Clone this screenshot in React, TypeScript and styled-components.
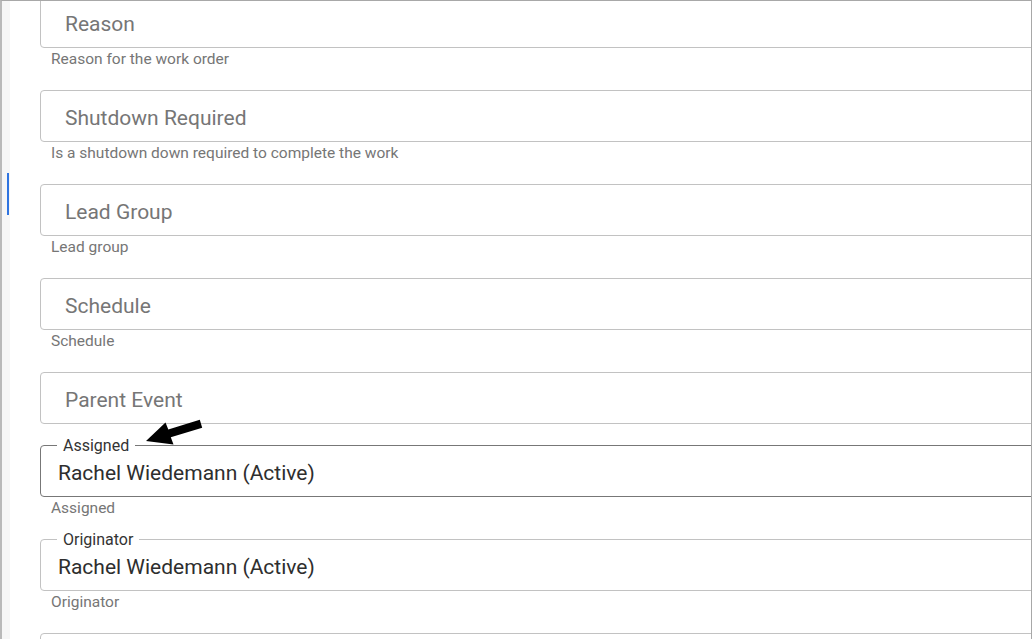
import styled, { createGlobalStyle } from 'styled-components';

const GlobalStyle = createGlobalStyle`
  html, body {
    margin: 0;
    padding: 0;
    background: #ffffff;
    font-family: Roboto, 'Liberation Sans', sans-serif;
  }
`;

type Field = {
  id: string;
  label: string;
  value?: string;
  helper?: string;
  active?: boolean;
};

const FIELDS: Field[] = [
  { id: 'reason', label: 'Reason', helper: 'Reason for the work order' },
  { id: 'shutdown', label: 'Shutdown Required', helper: 'Is a shutdown down required to complete the work' },
  { id: 'lead', label: 'Lead Group', helper: 'Lead group' },
  { id: 'schedule', label: 'Schedule', helper: 'Schedule' },
  { id: 'parent', label: 'Parent Event' },
  { id: 'assigned', label: 'Assigned', value: 'Rachel Wiedemann (Active)', helper: 'Assigned', active: true },
  { id: 'originator', label: 'Originator', value: 'Rachel Wiedemann (Active)', helper: 'Originator' },
  { id: 'next', label: '' },
];

const PointerArrow = () => (
  <ArrowSvg width='70' height='30' viewBox='140 415 70 30'>
    <polygon points='146,441 165.5,422.5 168.3,429.6 199.8,419.8 202.2,427.8 170.8,437.3 173.5,444.5' fill='#000' />
  </ArrowSvg>
);

const App = () => {
  return (
    <>
      <GlobalStyle />
      <Frame>
        <SideRail>
          <RailMarker />
        </SideRail>
        <Content>
          {FIELDS.map((field) => (
            <FieldGroup key={field.id}>
              <FieldBox active={field.active}>
                {field.value ? (
                  <>
                    <FloatLabel>{field.label}</FloatLabel>
                    <Value>{field.value}</Value>
                  </>
                ) : (
                  <Placeholder>{field.label}</Placeholder>
                )}
              </FieldBox>
              {field.helper && <Helper>{field.helper}</Helper>}
            </FieldGroup>
          ))}
        </Content>
        <PointerArrow />
      </Frame>
    </>
  );
};

export default App;

const Frame = styled.div`
  position: relative;
  display: flex;
  box-sizing: border-box;
  width: 1032px;
  height: 639px;
  overflow: hidden;
  border-top: 1px solid #a8a8a8;
  border-left: 2px solid #b9b9b9;
  border-right: 1px solid #a8a8a8;
  background: #ffffff;
`;

const SideRail = styled.div`
  flex: 0 0 8px;
  padding-top: 172px;
  background: #f6f6f6;
`;

const RailMarker = styled.div`
  margin-left: 5px;
  width: 2px;
  height: 42px;
  background: #2f74e0;
`;

const Content = styled.div`
  flex: 1;
  min-width: 0;
  margin-top: -5px;
  padding-left: 30px;
  overflow: hidden;
`;

const FieldGroup = styled.div`
  margin-bottom: 21px;
`;

const FieldBox = styled.div<{ active?: boolean }>`
  position: relative;
  display: flex;
  align-items: center;
  box-sizing: border-box;
  width: 1100px;
  height: 52px;
  border: 1px solid ${({ active }) => (active ? '#777777' : '#c2c2c2')};
  border-radius: 4px;
`;

const Placeholder = styled.span`
  margin-top: 3px;
  padding-left: 24px;
  font-size: 21px;
  color: #767676;
`;

const Value = styled.span`
  margin-top: 4px;
  padding-left: 17px;
  font-size: 21px;
  color: #2e2e2e;
`;

const FloatLabel = styled.span`
  position: absolute;
  top: -10px;
  left: 16px;
  padding: 0 6px;
  font-size: 16px;
  line-height: 20px;
  color: #333333;
  background: #ffffff;
`;

const Helper = styled.div`
  box-sizing: border-box;
  padding: 1px 0 0 11px;
  height: 21px;
  font-size: 15.5px;
  line-height: 21px;
  color: #767676;
`;

const ArrowSvg = styled.svg`
  position: absolute;
  left: 138px;
  top: 414px;
`;
